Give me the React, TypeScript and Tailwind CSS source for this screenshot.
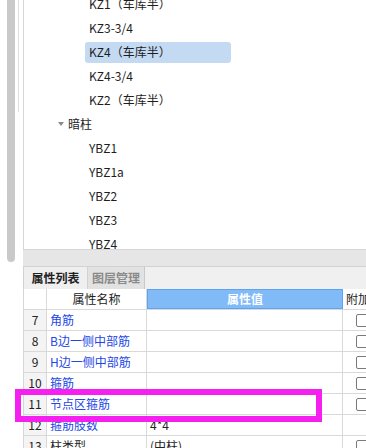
import React from "react";

const font = { fontFamily: '"Noto Sans CJK SC", "Noto Sans", sans-serif' };

const treeRows: { label: string; selected?: boolean; group?: boolean }[] = [
  { label: "KZ1（车库半）" },
  { label: "KZ3-3/4" },
  { label: "KZ4（车库半）", selected: true },
  { label: "KZ4-3/4" },
  { label: "KZ2（车库半）" },
  { label: "暗柱", group: true },
  { label: "YBZ1" },
  { label: "YBZ1a" },
  { label: "YBZ2" },
  { label: "YBZ3" },
  { label: "YBZ4" },
];

const rows: { n: string; name: string; value: string; check: boolean; dark?: boolean }[] = [
  { n: "7", name: "角筋", value: "", check: true },
  { n: "8", name: "B边一侧中部筋", value: "", check: true },
  { n: "9", name: "H边一侧中部筋", value: "", check: true },
  { n: "10", name: "箍筋", value: "", check: true },
  { n: "11", name: "节点区箍筋", value: "", check: true },
  { n: "12", name: "箍筋肢数", value: "4*4", check: false },
  { n: "13", name: "柱类型", value: "(中柱)", check: true, dark: true },
];

export default function App() {
  return (
    <div
      className="relative w-[366px] h-[448px] overflow-hidden bg-white text-[12px] text-[#222]"
      style={font}
    >
      <div className="flex h-full">
        {/* left strip with scrollbar */}
        <div className="relative w-[23px] shrink-0">
          <div className="ml-[7px] w-[8px] h-[262px] bg-[#c9c9c9] rounded-b-[4px]" />
          <div className="absolute left-[18px] top-0 w-px h-[112px] bg-[#dcdcdc]" />
        </div>

        {/* right column */}
        <div className="flex flex-col w-[343px] shrink-0">
          {/* tree */}
          <div className="h-[250px] shrink-0 border-l border-b border-[#d6d6d6] overflow-hidden">
            <div className="-mt-[8px]">
              {treeRows.map((r, i) => (
                <div key={i} className="h-[24px] flex items-center">
                  {r.group ? (
                    <div className="flex items-center pl-[34px]">
                      <svg width="6" height="4" viewBox="0 0 6 4" className="mr-[4px]">
                        <path d="M0 0 L6 0 L3 4 Z" fill="#8a8a8a" />
                      </svg>
                      <span className="text-[12px] text-[#1e1e1e]">{r.label}</span>
                    </div>
                  ) : (
                    <div
                      className={
                        r.selected
                          ? "ml-[61px] w-[146px] h-[21px] rounded-[3px] bg-[#c3daf2] flex items-center pl-[4px]"
                          : "ml-[65px] flex items-center"
                      }
                    >
                      <span className="text-[12px] text-[#1e1e1e]">{r.label}</span>
                    </div>
                  )}
                </div>
              ))}
            </div>
          </div>

          {/* gray strip */}
          <div className="h-[17px] shrink-0 bg-[#e6e6e6] border-b border-[#d2d2d2]" />

          {/* tabs */}
          <div className="h-[22px] shrink-0 bg-[#f0f0f0] flex">
            <div className="w-[65px] h-full flex items-center justify-center border-l border-r border-[#d2d2d2] bg-[#efefef] font-bold text-[#222]">
              属性列表
            </div>
            <div className="w-[57px] h-full flex items-center justify-center border-r border-[#c8c8c8] bg-[#e2e2e2] text-[#8a8a8a] font-bold">
              图层管理
            </div>
          </div>

          {/* table */}
          <div className="shrink-0 border-l border-[#d6d6d6] w-[400px]">
            <div className="flex h-[21px] border-b border-[#d9d9d9]">
              <div className="w-[23px] shrink-0 border-r border-[#d9d9d9] bg-white" />
              <div className="w-[100px] shrink-0 border-r border-[#d9d9d9] flex items-center justify-center text-[#222]">
                属性名称
              </div>
              <div className="w-[196px] shrink-0 bg-[#80bbf8] border border-[#5ea2f0] flex items-center justify-center text-white font-bold">
                属性值
              </div>
              <div className="flex-1 flex items-center pl-[3px] text-[#222]">附加</div>
            </div>
            {rows.map((r) => (
              <div key={r.n} className="flex h-[21px] border-b border-[#d9d9d9]">
                <div className="w-[23px] shrink-0 border-r border-[#d9d9d9] bg-[#f4f4f4] flex items-center justify-center text-[#222]">
                  {r.n}
                </div>
                <div
                  className={
                    "w-[100px] shrink-0 border-r border-[#d9d9d9] flex items-center pl-[3px] " +
                    (r.dark ? "text-[#222]" : "text-[#2346e6]")
                  }
                >
                  {r.name}
                </div>
                <div className="w-[196px] shrink-0 border-r border-[#d9d9d9] flex items-center pl-[3px] text-[#222]">
                  {r.value}
                </div>
                <div className="flex-1 flex items-center pl-[13px]">
                  {r.check && (
                    <div className="w-[13px] h-[13px] rounded-[2px] border border-[#7a7a7a] bg-white" />
                  )}
                </div>
              </div>
            ))}
          </div>
        </div>
      </div>

      {/* magenta annotation box */}
      <div className="absolute left-[15px] top-[389px] w-[307px] h-[33px] border-[6px] border-[#f51ff0]" />
    </div>
  );
}
